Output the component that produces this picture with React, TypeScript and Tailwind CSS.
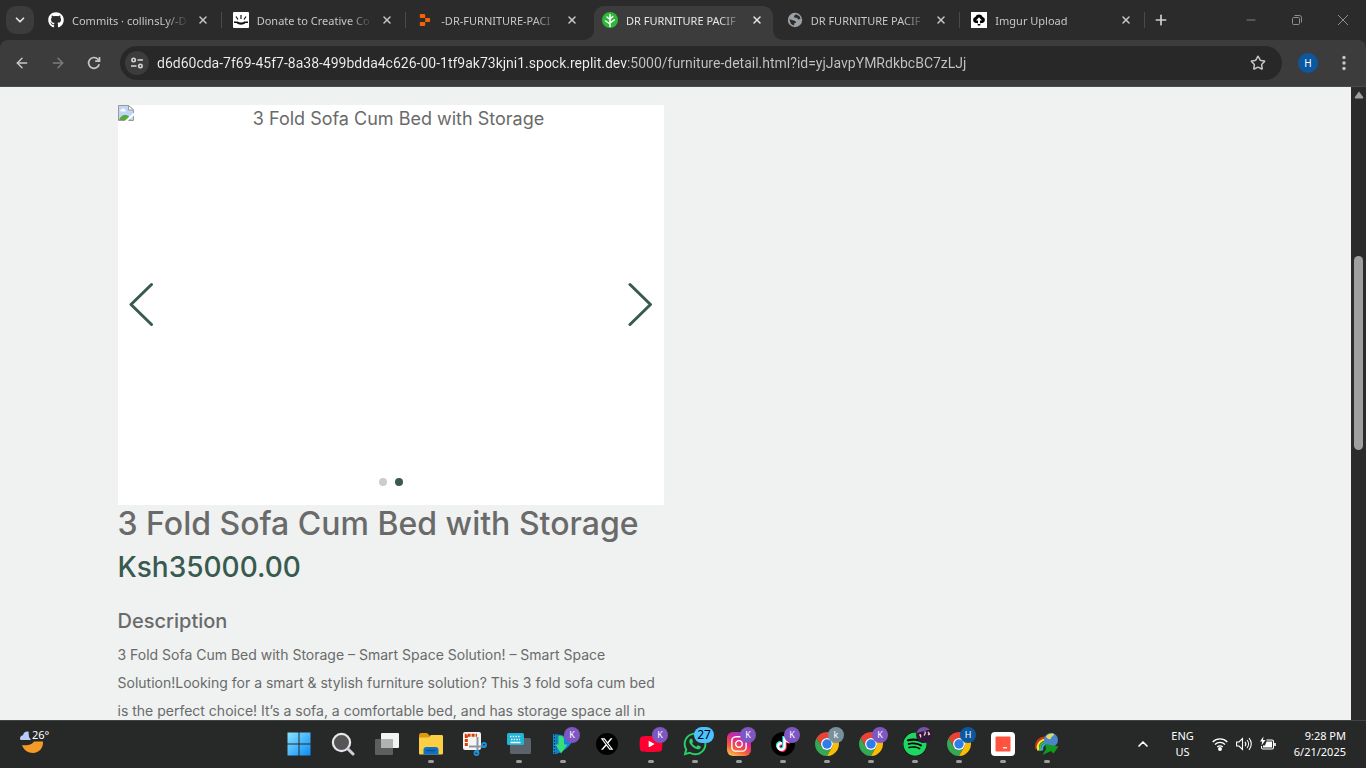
import type { ReactNode } from "react";
import {
  FaGithub,
  FaWhatsapp,
  FaXTwitter,
  FaSpotify,
  FaInstagram,
  FaTiktok,
  FaYoutube,
} from "react-icons/fa6";
import { ArrowLeft, ArrowRight, ChevronDown, ChevronUp, Minus, Plus, Star, X } from "lucide-react";

const URL_TEXT =
  "d6d60cda-7f69-45f7-8a38-499bdda4c626-00-1tf9ak73kjni1.spock.replit.dev:5000/furniture-detail.html?id=yjJavpYMRdkbcBC7zLJj";

type Tab = { title: string; icon: ReactNode; active?: boolean; divider?: boolean };

function DonateIcon() {
  return (
    <svg viewBox="0 0 16 16" className="size-4">
      <rect width="16" height="16" rx="1" fill="#fff" />
      <path d="M1 9.500h3.500c1.800 1.200 5.200 1.200 7 0H15V11h-2.500c-2.300 2.200-6.700 2.200-9 0H1Z" fill="#111" />
      <path d="M3 4.500 5 7.500M13 4.500 11 7.500M8 3v4" stroke="#111" strokeWidth="1.200" />
    </svg>
  );
}

function ReplitIcon() {
  return (
    <svg viewBox="0 0 16 16" className="size-4">
      <path
        d="M3.600 2h3.800c.5 0 .8.300.8.800v3.300H3.600a.8.800 0 0 1-.8-.8V2.800c0-.5.300-.8.800-.8ZM8.200 6.100h4.100c.5 0 .8.300.8.800v2.300c0 .5-.3.800-.8.800H8.200ZM3.600 10h4.600v3.200c0 .5-.3.800-.8.800H3.600a.8.800 0 0 1-.8-.8v-2.400c0-.5.300-.8.800-.8Z"
        fill="#f26207"
      />
    </svg>
  );
}

function TreeIcon() {
  return (
    <svg viewBox="0 0 16 16" className="size-4">
      <circle cx="8" cy="8" r="8" fill="#2fb838" />
      <path
        d="M8 2.500v12M8 12 3.600 9M8 11 12.300 7.800M8 7.500 5 5M8 7 10.800 4.500"
        stroke="#fff"
        strokeWidth="1.500"
        fill="none"
        strokeLinecap="round"
      />
    </svg>
  );
}

function GlobeIcon() {
  return (
    <svg viewBox="0 0 16 16" className="size-4">
      <circle cx="8" cy="8" r="7.200" fill="#9aa0a6" />
      <path d="M9 2.300 12.500 4.200 13.500 7 11 7.500 10 5.800H7.500L7 4Z" fill="#2b2b2b" />
      <path d="M2.300 7.200 6 8.300 8.500 9.200 9 11H7.500L7 13.500 4 12Z" fill="#2b2b2b" />
    </svg>
  );
}

function UploadIcon() {
  return (
    <svg viewBox="0 0 16 16" className="size-4">
      <rect width="16" height="16" fill="#fff" />
      <path
        d="M4.500 11A3.100 3.100 0 0 1 4.300 5a4 4 0 0 1 7.400 0 3.100 3.100 0 0 1-.2 6H9.300V13.500H6.700V11Z"
        fill="#000"
      />
      <path d="M8 5.200 11 8.600H9V12H7V8.600H5Z" fill="#fff" />
    </svg>
  );
}

const tabs: Tab[] = [
  { title: "Commits · collinsLy/-D", icon: <FaGithub className="size-4 text-white" />, divider: true },
  { title: "Donate to Creative Co", icon: <DonateIcon />, divider: true },
  { title: "-DR-FURNITURE-PACI", icon: <ReplitIcon /> },
  { title: "DR FURNITURE PACIF", icon: <TreeIcon />, active: true },
  { title: "DR FURNITURE PACIF", icon: <GlobeIcon />, divider: true },
  { title: "Imgur Upload", icon: <UploadIcon />, divider: true },
];

function TabFlare({ className }: { className: string }) {
  return (
    <svg viewBox="0 0 10 10" className={`absolute bottom-0 size-2.5 ${className}`}>
      <path d="M10 0V10H0A10 10 0 0 0 10 0Z" fill="#3c3c3c" />
    </svg>
  );
}

function BrowserTab({ tab }: { tab: Tab }) {
  return (
    <div className="relative h-[34px] min-w-0 px-[3px]">
      <div
        className={
          tab.active
            ? "relative flex h-full items-center rounded-t-[10px] bg-[#3c3c3c] px-2 pb-1.5 text-[#e6e6e6]"
            : "flex h-full items-center px-2 pb-1.5 text-[#c7c7c7]"
        }
      >
        {tab.active && (
          <>
            <TabFlare className="-left-2.5" />
            <TabFlare className="-right-2.5 -scale-x-100" />
          </>
        )}
        <a href="#tab" className="flex min-w-0 flex-1 items-center gap-2">
          <span className="shrink-0">{tab.icon}</span>
          <span className="flex-1 overflow-hidden pt-px text-[11px] leading-4 whitespace-nowrap [mask-image:linear-gradient(to_right,#000_calc(100%-24px),transparent)]">
            {tab.title}
          </span>
        </a>
        <button type="button" aria-label="Close tab" className="ml-1.5 flex size-4 items-center justify-center">
          <X className="size-3 shrink-0" strokeWidth={3} />
        </button>
      </div>
      {tab.divider && <span className="absolute top-1.5 right-0 h-4 w-px bg-[#4a4a4a]" />}
    </div>
  );
}

function TabStrip() {
  return (
    <div className="flex h-10 shrink-0 bg-[#2b2b2b] pt-1.5">
      <div className="pr-[3px] pl-1.5">
        <button
          type="button"
          aria-label="Search tabs"
          className="flex size-7 items-center justify-center rounded-[10px] bg-[#3c3c3c] text-[#e3e3e3]"
        >
          <ChevronDown className="size-3.5" strokeWidth={3} />
        </button>
      </div>
      <div className="grid max-w-[1108px] min-w-0 flex-1 grid-cols-6">
        {tabs.map((tab, i) => (
          <BrowserTab key={i} tab={tab} />
        ))}
      </div>
      <button type="button" aria-label="New tab" className="flex h-7 w-8 items-center justify-center text-[#d0d0d0]">
        <Plus className="size-4" strokeWidth={2.500} />
      </button>
      <div className="ml-auto flex h-7 text-[#8f8f8f]">
        <button type="button" aria-label="Minimize" className="flex w-[46px] items-center justify-center">
          <Minus className="size-3.5" strokeWidth={1.500} />
        </button>
        <button type="button" aria-label="Restore" className="flex w-[46px] items-center justify-center">
          <svg viewBox="0 0 12 12" className="size-3" fill="none" stroke="currentColor">
            <rect x="1.500" y="3.500" width="7" height="7" rx="1" />
            <path d="M3.500 1.500h5a2 2 0 0 1 2 2v5" />
          </svg>
        </button>
        <button type="button" aria-label="Close" className="flex w-[46px] items-center justify-center">
          <svg viewBox="0 0 12 12" className="size-3" fill="none" stroke="currentColor">
            <path d="m1 1 10 10M11 1 1 11" />
          </svg>
        </button>
      </div>
    </div>
  );
}

function Toolbar() {
  return (
    <div className="h-[47px] shrink-0 bg-[#2b2b2b]">
      <div className="flex h-full items-center rounded-t-lg border-b border-[#4a4a4a] bg-[#3c3c3c] px-1 text-[#c7c7c7]">
        <div className="flex pr-2">
          <button type="button" aria-label="Back" className="flex size-9 items-center justify-center">
            <ArrowLeft className="size-4" strokeWidth={2.200} />
          </button>
          <button type="button" aria-label="Forward" className="flex size-9 items-center justify-center text-[#7c7c7c]">
            <ArrowRight className="size-4" strokeWidth={2.200} />
          </button>
          <button type="button" aria-label="Reload" className="flex size-9 items-center justify-center">
            <svg viewBox="0 0 16 16" className="size-4" fill="none" stroke="currentColor" strokeWidth="1.700">
              <path d="M13.200 9.200A5.400 5.400 0 1 1 12 4.300L13.400 6" />
              <path d="M13.500 2v4.200H9.200" />
            </svg>
          </button>
        </div>
        <div className="flex h-[34px] min-w-0 flex-1 items-center gap-2 rounded-full bg-[#282828] pr-3 pl-[5px]">
          <button
            type="button"
            aria-label="View site information"
            className="flex size-6 shrink-0 items-center justify-center rounded-full bg-[#3c3c3c] text-[#d6d6d6]"
          >
            <svg viewBox="0 0 14 14" className="size-3.5" fill="none" stroke="currentColor" strokeWidth="1.600">
              <circle cx="3.600" cy="4" r="1.700" />
              <path d="M7.500 4H13M1 10h5.500" />
              <circle cx="10.400" cy="10" r="1.700" />
            </svg>
          </button>
          <input
            type="text"
            aria-label="Address"
            defaultValue={URL_TEXT}
            className="min-w-0 flex-1 bg-[linear-gradient(to_right,#f0f0f0_470px,#c4c4c4_470px)] bg-clip-text font-['Roboto',sans-serif] text-[14px] text-transparent caret-white outline-none"
          />
          <button type="button" aria-label="Bookmark" className="flex size-6 shrink-0 items-center justify-center">
            <Star className="size-4" strokeWidth={2.200} />
          </button>
        </div>
        <button
          type="button"
          aria-label="Profile"
          className="mr-2 ml-4 flex size-5 items-center justify-center rounded-full bg-[#0b57a0] text-[10px] text-white"
        >
          H
        </button>
        <button type="button" aria-label="Menu" className="flex h-9 w-9 items-center justify-center">
          <svg viewBox="0 0 4 16" className="h-4 w-1" fill="currentColor">
            <circle cx="2" cy="2.500" r="1.700" />
            <circle cx="2" cy="8" r="1.700" />
            <circle cx="2" cy="13.500" r="1.700" />
          </svg>
        </button>
      </div>
    </div>
  );
}

function BrokenImage() {
  return (
    <svg viewBox="0 0 16 16" className="size-4 shrink-0">
      <path d="M.5.500h10L15.500 5v10.500H.5Z" fill="#c1d5f5" stroke="#9a9a9a" />
      <path d="M2.500 6.500a1.600 1.600 0 0 1 1.200-2.200 1.800 1.800 0 0 1 3.200.4A1.100 1.100 0 0 1 7.500 6.500Z" fill="#fff" />
      <path d="M1 15c1.500-4 4-5.500 7-5s3 1.500 4.500 5Z" fill="#56ab38" />
      <path d="M10.500.500V5H15.500Z" fill="#fff" stroke="#9a9a9a" />
      <path d="m7.500 16.500 9-8" stroke="#fff" strokeWidth="2.200" />
    </svg>
  );
}

function Carousel() {
  return (
    <section className="relative h-[400px] bg-white" aria-label="Product images">
      <div className="flex items-start">
        <BrokenImage />
        <p className="flex-1 text-center text-[18px] leading-7">3 Fold Sofa Cum Bed with Storage</p>
      </div>
      <div className="absolute inset-x-2.5 top-[177px] flex justify-between text-[#385a4f]">
        <button type="button" aria-label="Previous slide">
          <svg viewBox="0 0 27 44" className="h-11 w-[27px]" fill="none" stroke="currentColor" strokeWidth="3" strokeLinecap="round" strokeLinejoin="round">
            <path d="M23.500 2.500 3 22.500l20.500 20" />
          </svg>
        </button>
        <button type="button" aria-label="Next slide">
          <svg viewBox="0 0 27 44" className="h-11 w-[27px]" fill="none" stroke="currentColor" strokeWidth="3" strokeLinecap="round" strokeLinejoin="round">
            <path d="m3 2.500 20.500 20-20.500 20" />
          </svg>
        </button>
      </div>
      <div className="absolute inset-x-0 bottom-[19px] flex justify-center gap-2">
        <button type="button" aria-label="Slide 1" className="size-2 rounded-full bg-[#cccccc]" />
        <button type="button" aria-label="Slide 2" className="size-2 rounded-full bg-[#385a4f]" />
      </div>
    </section>
  );
}

function ProductPage() {
  return (
    <div className="flex min-h-0 flex-1 bg-[#eff2f1]">
      <main className="min-w-0 flex-1 overflow-hidden font-['Inter',sans-serif] text-[#6a6a6a]">
        <div className="mx-auto grid max-w-[1140px] grid-cols-2 gap-6 px-3 pt-[18px]">
          <div className="min-w-0">
            <Carousel />
            <h1 className="text-[32px] leading-[38px] font-medium">3 Fold Sofa Cum Bed with Storage</h1>
            <p className="mt-1.5 text-[28px] leading-9 font-medium text-[#385a4f]">Ksh35000.00</p>
            <h2 className="mt-6 text-[20px] leading-6 font-medium">Description</h2>
            <p className="mt-2 text-[14px] leading-7">
              3 Fold Sofa Cum Bed with Storage – Smart Space Solution! – Smart Space Solution!Looking for a smart
              &amp; stylish furniture solution? This 3 fold sofa cum bed is the perfect choice! It’s a sofa, a
              comfortable bed, and has storage space all in
            </p>
          </div>
        </div>
      </main>
      <div className="flex w-[15px] shrink-0 flex-col items-center bg-[#2b2b2b] pt-1">
        <svg viewBox="0 0 10 8" className="h-2 w-2.5">
          <path d="M5 .500 9.300 6.300 8.800 7.500H1.200L.700 6.300Z" fill="#9f9f9f" />
        </svg>
        <div className="mt-[157px] h-[194px] w-[9px] rounded-full bg-[#9f9f9f]" />
      </div>
    </div>
  );
}

function ChromeLogo() {
  return (
    <svg viewBox="0 0 24 24" className="size-6">
      <path d="M12 6h10.390A12 12 0 0 0 1.610 6L6.800 15A6 6 0 0 1 12 6Z" fill="#ea4335" />
      <path d="M6.800 15 1.610 6A12 12 0 0 0 12 24l5.200-9A6 6 0 0 1 6.800 15Z" fill="#34a853" />
      <path d="M17.200 15 12 24A12 12 0 0 0 22.390 6H12a6 6 0 0 1 5.200 9Z" fill="#fbbc04" />
      <circle cx="12" cy="12" r="6" fill="#fff" />
      <circle cx="12" cy="12" r="4.700" fill="#2f7de9" />
    </svg>
  );
}

function StartLogo() {
  return (
    <svg viewBox="0 0 24 24" className="size-6">
      <defs>
        <linearGradient id="start" x1="0" y1="0" x2="1" y2="1" gradientUnits="objectBoundingBox">
          <stop offset="0" stopColor="#8ae4ff" />
          <stop offset="1" stopColor="#0a8df5" />
        </linearGradient>
      </defs>
      <path d="M.500.500h11v11H.500ZM12.500.500h11v11h-11ZM.500 12.500h11v11H.500ZM12.500 12.500h11v11h-11Z" fill="url(#start)" />
    </svg>
  );
}

function SearchLogo() {
  return (
    <svg viewBox="0 0 24 24" className="size-6" fill="none">
      <circle cx="10.500" cy="10.500" r="8.600" fill="#555" stroke="#e8e8ec" strokeWidth="2.200" />
      <path d="m17 17 5 5" stroke="#cfcfd8" strokeWidth="3" strokeLinecap="round" />
    </svg>
  );
}

function TaskViewLogo() {
  return (
    <svg viewBox="0 0 24 24" className="size-6">
      <rect x="6" y="1" width="18" height="15" rx="1" fill="#f3f3f3" />
      <rect x="0" y="7" width="18" height="16" rx="1" fill="#5d5f5f" />
      <path d="M6 7h12v9H6Z" fill="#b1b2b2" />
    </svg>
  );
}

function FolderLogo() {
  return (
    <svg viewBox="0 0 24 24" className="size-6">
      <path d="M0 3.500C0 2 .8 1 2 1h6l2.500 2.500V8H0Z" fill="#dc9a06" />
      <path d="M0 5.500h9.500L12 3h10.500c1 0 1.500.6 1.500 1.500V21c0 1-.6 1.500-1.500 1.500h-21C.6 22.500 0 22 0 21Z" fill="#fcce45" />
      <path d="M4.500 22.500V18c0-1.800 1-3 3-3h9c2 0 3 1.200 3 3v4.500Z" fill="#0f70c4" />
      <path d="M8 18.500h8" stroke="#074f93" strokeWidth="1.500" strokeLinecap="round" />
    </svg>
  );
}

function SnippingLogo() {
  return (
    <svg viewBox="0 0 24 24" className="size-6">
      <rect width="18" height="18" rx="2" fill="#f4f4f4" y="0" />
      <path d="M3.300 14V3.300H14" fill="none" stroke="#d83b01" strokeWidth="3" strokeDasharray="3 1" />
      <path d="M14.500 5v16M6 14.500h16" stroke="#8c979f" strokeWidth="2" />
      <circle cx="21" cy="13" r="2" fill="none" stroke="#1c94dc" strokeWidth="1.800" />
      <circle cx="13.500" cy="21" r="2" fill="none" stroke="#1c94dc" strokeWidth="1.800" />
    </svg>
  );
}

function KeyboardLogo() {
  return (
    <svg viewBox="0 0 24 24" className="size-6">
      <rect x="3" y="6" width="21" height="16" rx="1.500" fill="#5b626a" />
      <rect x="0" y="1" width="17" height="12" rx="1.500" fill="#21b4d6" />
      <path d="M3 4.500h11M4 7.500h9" stroke="#e9fbff" strokeWidth="1.300" strokeDasharray="1.500 1.200" />
      <path d="M3.500 10.500h10" stroke="#fff" strokeWidth="1.500" />
    </svg>
  );
}

function DownloaderLogo() {
  return (
    <svg viewBox="0 0 24 24" className="size-6">
      <path d="M5.500 2.500C13 2 17 6 20.500 11c-3 4-7 8-15 11Z" fill="#1283dd" />
      <path d="M2 2h3.500v20H2Z" fill="#128fd2" />
      <path d="M3.500 2v20" stroke="#06314f" strokeWidth="1.300" strokeDasharray="1.500 1.500" />
      <path d="M7.500 4c3-.5 5 0 5.500 3v5.500h3.500L10 21.500 4.500 12.500h3Z" fill="#37df78" />
    </svg>
  );
}

function XLogo() {
  return (
    <span className="flex size-[22px] items-center justify-center rounded-full bg-black">
      <FaXTwitter className="size-3.5 text-white" />
    </span>
  );
}

function YoutubeLogo() {
  return <FaYoutube className="size-6 text-[#ff0033] [background:linear-gradient(#fff,#fff)_center/8px_7px_no-repeat]" />;
}

function InstagramLogo() {
  return (
    <span className="flex size-6 items-center justify-center rounded-md bg-[linear-gradient(25deg,#fdc34d_5%,#f5533d_35%,#d6249f_65%,#5b51d8)]">
      <FaInstagram className="size-[18px] text-white" />
    </span>
  );
}

function TiktokLogo() {
  return (
    <span className="flex size-6 items-center justify-center rounded-full bg-black">
      <FaTiktok className="size-3.5 text-white [filter:drop-shadow(-1px_-1px_0_#25f4ee)_drop-shadow(1px_1px_0_#fe2c55)]" />
    </span>
  );
}

function SpotifyLogo() {
  return (
    <span className="flex size-6 rounded-full bg-black">
      <FaSpotify className="size-6 text-[#1ed760]" />
    </span>
  );
}

function RedSquareLogo() {
  return (
    <svg viewBox="0 0 24 24" className="size-6">
      <rect width="24" height="24" rx="4" fill="#fff" />
      <rect x="4.500" y="4.500" width="15" height="15" rx="1" fill="#ff5340" />
      <path d="M12 15.800h4" stroke="#fff" strokeWidth="1.300" />
    </svg>
  );
}

function IdmLogo() {
  return (
    <svg viewBox="0 0 24 24" className="size-6">
      <path d="M1.500 17C0 10 4 5.500 11 5.500" fill="none" stroke="#dc3022" strokeWidth="2" />
      <path d="M3.300 18.500C1.500 11.500 6 7.300 12 7.500" fill="none" stroke="#f5e92d" strokeWidth="2.200" />
      <path d="M5.300 19C4 13.500 7 9.500 12 9.700" fill="none" stroke="#43b649" strokeWidth="2" />
      <path d="M7.300 18.500C6.500 14.500 8.500 11.700 12 11.500" fill="none" stroke="#37a6ea" strokeWidth="2" />
      <circle cx="16" cy="8" r="7" fill="#4a86c8" />
      <path d="M11 4.500c2-2.800 6-3.500 8-2.500 0 2-3 2.500-3 4.500-1 1.500-4 .5-5-2Z" fill="#dcd96a" />
      <path d="m10 12 13.500 2.500-5 7-2.500-2.500-8.500 4 3.500-6Z" fill="#129a1f" />
    </svg>
  );
}

function SpotifyAvatar() {
  return (
    <svg viewBox="0 0 16 16" className="absolute -top-[5px] left-[13px] size-4">
      <circle cx="8" cy="8" r="8" fill="#34183b" />
      <path d="M.500 6A8 8 0 0 1 14 2.500Z" fill="#7752a8" />
      <path d="M3.500 8.500c.8-1.500 1.500-.5 1 2M8.500 5c1.500-.5.500 2.500-.5 3.500M12 5l1.500 2-1.500 1" stroke="#f4d4c8" strokeWidth="1.300" fill="none" />
    </svg>
  );
}

type TaskbarApp = { name: string; logo: ReactNode; badge?: ReactNode; running?: boolean };

function Badge({ text, tone }: { text: string; tone: string }) {
  return (
    <span className={`absolute -top-[5px] left-[13px] flex size-4 items-center justify-center rounded-full text-[9px] text-white ${tone}`}>
      {text}
    </span>
  );
}

const purpleK = <Badge text="K" tone="bg-[#7e57c2]" />;

const apps: TaskbarApp[] = [
  { name: "Start", logo: <StartLogo /> },
  { name: "Search", logo: <SearchLogo /> },
  { name: "Task view", logo: <TaskViewLogo /> },
  { name: "File Explorer", logo: <FolderLogo />, running: true },
  { name: "Snipping Tool", logo: <SnippingLogo /> },
  { name: "On-screen keyboard", logo: <KeyboardLogo />, running: true },
  { name: "Downloader", logo: <DownloaderLogo />, badge: purpleK, running: true },
  { name: "X", logo: <XLogo /> },
  { name: "YouTube", logo: <YoutubeLogo />, badge: purpleK, running: true },
  {
    name: "WhatsApp",
    logo: <FaWhatsapp className="size-[26px] text-[#25d366]" />,
    badge: (
      <span className="absolute -top-[5px] left-[11px] flex h-4 w-5 items-center justify-center rounded-full bg-[#4cc2ff] text-[12px] text-black">
        27
      </span>
    ),
    running: true,
  },
  { name: "Instagram", logo: <InstagramLogo />, badge: purpleK, running: true },
  { name: "TikTok", logo: <TiktokLogo />, badge: purpleK, running: true },
  { name: "Chrome, k", logo: <ChromeLogo />, badge: <Badge text="k" tone="bg-[#78909c]" />, running: true },
  { name: "Chrome, K", logo: <ChromeLogo />, badge: purpleK, running: true },
  { name: "Spotify", logo: <SpotifyLogo />, badge: <SpotifyAvatar />, running: true },
  { name: "Chrome, H", logo: <ChromeLogo />, badge: <Badge text="H" tone="bg-[#0b57a0]" />, running: true },
  { name: "Recorder", logo: <RedSquareLogo />, running: true },
  { name: "Download Manager", logo: <IdmLogo />, running: true },
];

function Taskbar() {
  return (
    <footer className="grid h-12 shrink-0 grid-cols-[1fr_auto_1fr] border-t border-[#414443] bg-[#272929] pr-5 pb-0.5 text-white">
      <button type="button" aria-label="Weather" className="flex items-start pt-1.5 pl-5 text-[11px] leading-4">
        <svg viewBox="0 0 24 28" className="h-7 w-6">
          <path d="M0 11.500C0 9.500 1.500 8.500 3 8.300 3.500 5.500 5.500 4 8.500 4.500L9 10l2 3H1.500C.500 13 0 12.500 0 11.500Z" fill="#b9cdf6" />
          <path d="M2 18c5 1 10.500-.5 12-3.500h9C23.500 21 19 26 13 26 8 26 3.500 23 2 18Z" fill="#f39a27" />
        </svg>
        <span className="-ml-3">26°</span>
      </button>
      <nav className="flex" aria-label="Taskbar">
        {apps.map((app) => (
          <button key={app.name} type="button" aria-label={app.name} className="relative flex w-11 items-center justify-center">
            <span className="relative flex size-6 items-center justify-center">
              {app.logo}
              {app.badge}
            </span>
            {app.running && <span className="absolute bottom-[3px] h-[3px] w-1.5 rounded-full bg-[#9c9c9c]" />}
          </button>
        ))}
      </nav>
      <div className="flex items-center justify-end text-[11px] leading-4">
        <button type="button" aria-label="Show hidden icons" className="mr-5">
          <ChevronUp className="size-4" strokeWidth={2.500} />
        </button>
        <p className="mr-[18px] text-center">
          ENG
          <br />
          US
        </p>
        <div className="mr-[18px] flex items-center gap-2">
          <svg viewBox="0 0 16 16" className="size-4" fill="none" stroke="currentColor" strokeWidth="1.300">
            <path d="M.700 6a10.300 10.300 0 0 1 14.600 0M3 8.500a7 7 0 0 1 10 0M5.300 11a3.800 3.800 0 0 1 5.400 0" />
            <circle cx="8" cy="13" r="1.300" fill="currentColor" />
          </svg>
          <svg viewBox="0 0 16 16" className="size-4" fill="none" stroke="currentColor" strokeWidth="1.100">
            <path d="M.600 6H3l3.500-3.500v11L3 10H.600ZM9 5.800c1 1.300 1 3.100 0 4.400M11 4c2 2.300 2 5.700 0 8M13 2.200c3 3.400 3 8.200 0 11.600" />
          </svg>
          <svg viewBox="0 0 16 16" className="size-4" fill="none" stroke="currentColor" strokeWidth="1.100">
            <path d="M6.500 4H12a1.500 1.500 0 0 1 1.500 1.500v6A1.500 1.500 0 0 1 12 13H3a1.500 1.500 0 0 1-1.500-1.500V10" />
            <path d="M6.500 5.500H12v6H3V9.500h2Z" fill="currentColor" stroke="none" />
            <path d="M3.500.500 0 5.500h2.200L1.500 9.500 5.500 4H3Z" fill="currentColor" stroke="none" />
            <path d="M15 7v3" strokeWidth="1.600" />
          </svg>
        </div>
        <p className="text-right">
          9:28 PM
          <br />
          6/21/2025
        </p>
      </div>
    </footer>
  );
}

export default function App() {
  return (
    <div className="flex h-screen flex-col overflow-hidden font-['Noto_Sans','Open_Sans',sans-serif]">
      <TabStrip />
      <Toolbar />
      <ProductPage />
      <Taskbar />
    </div>
  );
}
